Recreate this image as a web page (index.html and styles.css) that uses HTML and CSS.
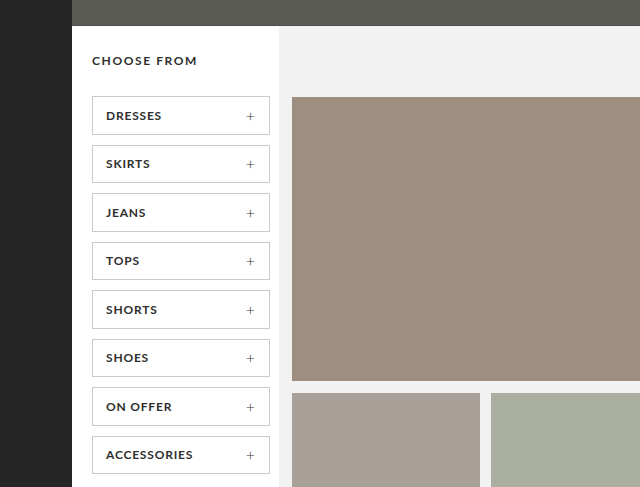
FILE: index.html
```html
<!DOCTYPE html>
<html lang="en">
<head>
    <meta charset="UTF-8">
    <meta name="viewport" content="width=device-width, initial-scale=1.0">
    <title>Shop</title>
    <link rel="stylesheet" href="styles.css">
</head>
<body>

<div class="rail"></div>

<div class="page">
    <div class="topbar"></div>

    <div class="content">
        <aside class="sidebar">
            <h2>Choose From</h2>
            <ul class="cats">
                <li><span>Dresses</span><span class="plus">+</span></li>
                <li><span>Skirts</span><span class="plus">+</span></li>
                <li><span>Jeans</span><span class="plus">+</span></li>
                <li><span>Tops</span><span class="plus">+</span></li>
                <li><span>Shorts</span><span class="plus">+</span></li>
                <li><span>Shoes</span><span class="plus">+</span></li>
                <li><span>On Offer</span><span class="plus">+</span></li>
                <li><span>Accessories</span><span class="plus">+</span></li>
            </ul>
        </aside>

        <main class="main">
            <div class="photo photo-big"></div>
            <div class="photo-row">
                <div class="photo photo-rose"></div>
                <div class="photo photo-sage"></div>
            </div>
        </main>
    </div>
</div>

</body>
</html>
```

FILE: styles.css
```css
* {
    box-sizing: border-box;
    font-family: Lato, "Open Sans", sans-serif;
}

html, body {
    height: 100%;
}

body {
    margin: 0;
    display: flex;
    overflow: hidden;
    background-color: #f2f2f2;
}

.rail {
    width: 72px;
    flex-shrink: 0;
    background-color: #262626;
}

.page {
    flex: 1;
    display: flex;
    flex-direction: column;
}

.topbar {
    height: 26px;
    flex-shrink: 0;
    background-color: #5b5b55;
    border-bottom: 1px solid #4e4e49;
}

.content {
    flex: 1;
    display: flex;
    min-height: 0;
}

.sidebar {
    width: 207px;
    background-color: #fff;
    padding: 27px 9px 0 20px;
}

.sidebar h2 {
    margin: 0 0 27px 0;
    font-size: 12px;
    font-weight: 700;
    letter-spacing: 1.6px;
    text-transform: uppercase;
    color: #2e2e2e;
    line-height: 16px;
}

.cats {
    list-style: none;
    margin: 0;
    padding: 0;
}

.cats li {
    display: flex;
    justify-content: space-between;
    align-items: center;
    height: 38.5px;
    margin-bottom: 10px;
    padding: 0 14px 0 13px;
    border: 1px solid #cdc9c5;
    font-size: 12px;
    font-weight: 700;
    letter-spacing: 0.8px;
    text-transform: uppercase;
    color: #2e2e2e;
}

.cats li:last-child {
    margin-bottom: 0;
}

.cats .plus {
    font-size: 16px;
    font-weight: 300;
    letter-spacing: 0;
    color: #333;
}

.main {
    flex: 1;
    padding: 71px 0 0 13px;
}

.photo {
    background-color: #9e8e7f;
}

.photo-big {
    height: 284px;
}

.photo-row {
    display: flex;
    gap: 11px;
    margin-top: 12px;
    height: 94px;
}

.photo-rose {
    width: 188px;
    background-color: #a9a09a;
}

.photo-sage {
    flex: 1;
    background-color: #abaf9f;
}
```
